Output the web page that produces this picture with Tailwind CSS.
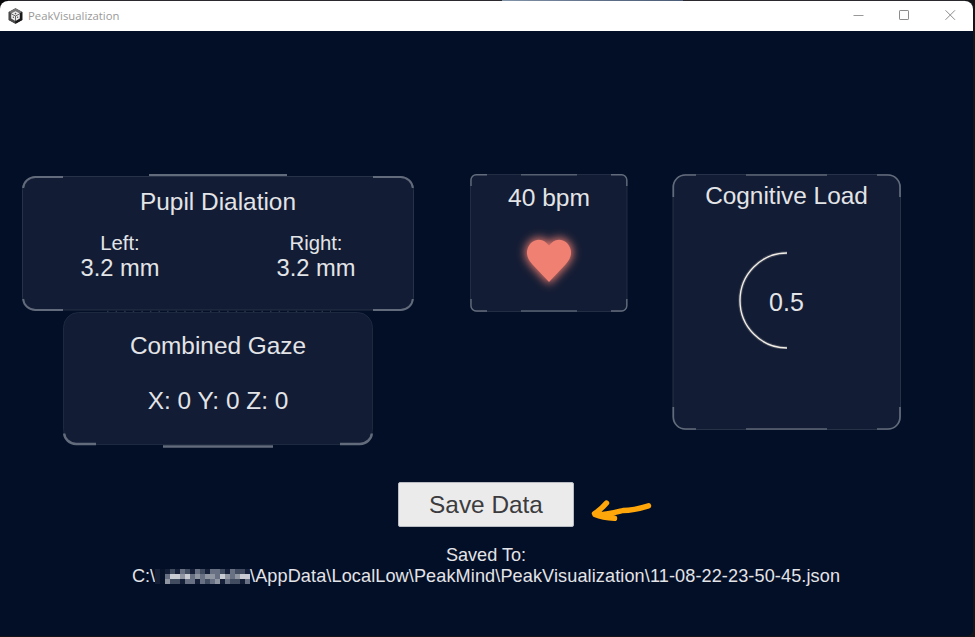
<!DOCTYPE html>
<html lang="en">
<head>
<meta charset="utf-8">
<title>PeakVisualization</title>
<script src="https://cdn.jsdelivr.net/npm/@tailwindcss/browser@4"></script>
</head>
<body class="h-[637px] w-[975px] overflow-hidden bg-[#151518] font-['Liberation_Sans',Arial,sans-serif] text-[#e3e4e7]">
<div class="relative flex h-[636px] w-[973px] flex-col pt-px">
  <div class="absolute left-0 top-0 h-3 w-[973px] bg-[#2b292d]"></div>
  <div class="absolute left-[502px] top-0 h-px w-[181px] bg-linear-to-r from-[#8294a8] via-[#62728b] to-[#4b5c78]"></div>
  <div class="absolute left-0 top-0 size-2 bg-[#09090b]"></div>
  <div class="absolute right-0 top-0 size-2 bg-[#151518]"></div>
  <header class="relative flex h-[30px] shrink-0 items-center justify-between rounded-t-lg bg-white pl-2 pr-[17px]">
    <div class="flex items-center gap-[5px]">
      <svg class="-mt-px h-4 w-[15px]" viewBox="0 0 15 16">
        <path d="M7.500.3 14.300 4v8L7.500 15.800.7 12V4z" fill="#353535"/>
        <path d="M7.500.3 14.300 4 11 5.800 7.500 3.900 4 5.800.7 4z" fill="#777"/>
        <path d="M.7 4 4 5.800v4.400L7.500 12v3.800L.7 12z" fill="#4b4b4b"/>
        <path d="M14.300 4v8l-6.800 3.800V12l3.500-1.800V5.800z" fill="#181818"/>
        <path d="m7.500 3.200 4.300 2.400v4.900l-4.300 2.400-4.300-2.400V5.600z" fill="#ededed"/>
        <path d="M7.500 8v5M7.500 8 3.200 5.800M7.500 8l4.300-2.200" stroke="#444" stroke-width=".8"/>
        <circle cx="7.500" cy="5.600" r=".8" fill="#555"/><circle cx="5.400" cy="9.300" r=".7" fill="#555"/><circle cx="9.600" cy="9.300" r=".7" fill="#555"/>
      </svg>
      <span class="font-['Open_Sans',sans-serif] text-[11.3px] leading-none text-[#999]">PeakVisualization</span>
    </div>
    <div class="flex items-center gap-[35px]">
      <svg class="h-3 w-[11px]" viewBox="0 0 11 12" fill="none" stroke="#999"><path d="M.5 5.500h10"/></svg>
      <svg class="h-3 w-[11px]" viewBox="0 0 11 12" fill="none" stroke="#8c8c8c"><rect x=".5" y=".5" width="9" height="9" rx=".6"/></svg>
      <svg class="h-3 w-[11px]" viewBox="0 0 11 12" fill="none" stroke="#8c8c8c"><path d="m.5.300 9.500 9.500m0-9.500-9.500 9.500"/></svg>
    </div>
  </header>

  <main class="flex flex-1 flex-col rounded-br-md bg-[#030f27] pt-[143px]">
    <div class="flex items-start pl-[22px]">
      <div class="flex w-[392px] flex-col items-center">
        <section class="relative h-[138px] w-[392px]">
          <svg class="absolute inset-0 h-[138px] w-[392px]" viewBox="0 0 392 138" fill="none">
            <rect x=".5" y="2.500" width="391" height="133.500" rx="13" fill="#121c34" stroke="#273147"/>
            <g stroke="#626b7b" stroke-width="2">
              <path d="M1.200 14A12.500 11.500 0 0 1 13.500 3H41M351 3h27.500a12.500 11.500 0 0 1 12.300 11M1.200 125a12.500 11.500 0 0 0 12.300 11H41M351 136h27.500a12.500 11.500 0 0 0 12.300-11"/>
              <path d="M127 1h138"/>
            </g>
            <path d="M85 137.300h224" stroke="#2b354a" stroke-width="1.200" stroke-dasharray="1.500 7.080"/>
          </svg>
          <h2 class="relative pt-[14px] text-center text-[24.4px] leading-7">Pupil Dialation</h2>
          <div class="relative mt-[15px] flex justify-center gap-[117px] text-center">
            <div class="w-[79px] whitespace-nowrap"><p class="text-[20.3px] leading-[25px]">Left:</p><p class="text-[23.7px] leading-[25px]">3.2 mm</p></div>
            <div class="w-[79px] whitespace-nowrap"><p class="text-[20.3px] leading-[25px]">Right:</p><p class="text-[23.7px] leading-[25px]">3.2 mm</p></div>
          </div>
        </section>
        <section class="relative h-[137px] w-[310px]">
          <svg class="absolute inset-0 h-[137px] w-[310px]" viewBox="0 0 310 137" fill="none">
            <rect x=".5" y=".5" width="309" height="132" rx="15" fill="#121c34" stroke="#1d293f"/>
            <path d="M1.200 121.500A12.500 11 0 0 0 13 132h20M277 132h20a12.500 11 0 0 0 11.800-10.500M100 134.500h110" stroke="#626b7b" stroke-width="2.400"/>
          </svg>
          <h2 class="relative pt-[20px] text-center text-[24.4px] leading-7">Combined Gaze</h2>
          <p class="relative mt-[27px] text-center text-[24.4px] leading-7">X: 0 Y: 0 Z: 0</p>
        </section>
      </div>

      <section class="relative ml-[56px] flex h-[138px] w-[158px] flex-col items-center">
        <svg class="absolute inset-0 h-[138px] w-[158px]" viewBox="0 0 158 138" fill="none">
          <rect x=".5" y=".5" width="156.500" height="137" rx="6" fill="#121c34" stroke="#222d43"/>
          <path d="M1 12V6A5.300 5.300 0 0 1 6.300.7H17M141 .7h10.500A5.300 5.300 0 0 1 156.800 6v6M1 125v6.700A5.300 5.300 0 0 0 6.300 137H17M141 137h10.500a5.300 5.300 0 0 0 5.300-5.300V125" stroke="#626b7b" stroke-width="1.400"/>
          <path d="M51 .7h56M51 137h56" stroke="#566071" stroke-width="1.400"/>
        </svg>
        <h2 class="relative pt-[10px] text-[24.6px] leading-7">40 bpm</h2>
        <svg class="relative mt-[14px] h-[70px] w-[80px]" viewBox="0 0 80 70">
          <defs><filter id="glow" x="-50%" y="-50%" width="200%" height="200%"><feGaussianBlur stdDeviation="5"/></filter></defs>
          <path d="M40 56 23.500 38.500C18.500 33 17 28 18.500 23 21 14 31 10.500 37.500 17L40 19.500 42.500 17C49 10.500 59 14 61.500 23 63 28 61.500 33 56.500 38.500Z" fill="#ee7e70" stroke="#ee7e70" stroke-width="3" filter="url(#glow)"/>
          <path d="M40 56 23.500 38.500C18.500 33 17 28 18.500 23 21 14 31 10.500 37.500 17L40 19.500 42.500 17C49 10.500 59 14 61.500 23 63 28 61.500 33 56.500 38.500Z" fill="#ef8072"/>
        </svg>
      </section>

      <section class="relative ml-[44px] flex h-[256px] w-[229px] flex-col items-center">
        <svg class="absolute inset-0 h-[256px] w-[229px]" viewBox="0 0 229 256" fill="none">
          <rect x="1" y=".5" width="227.500" height="255" rx="13" fill="#121c34" stroke="#273147"/>
          <path d="M1.300 23V13A12 12 0 0 1 13.300 1H24M205 1h11a12 12 0 0 1 12 12v10M1.300 233v10a12 12 0 0 0 12 12H24M205 255h11a12 12 0 0 0 12-12v-10" stroke="#626b7b" stroke-width="1.700"/>
          <path d="M74 1h81M74 255h81" stroke="#5d6676" stroke-width="1.700"/>
        </svg>
        <h2 class="relative pt-[8px] text-[24.4px] leading-7">Cognitive Load</h2>
        <div class="relative mt-[41px] flex h-[98px] w-[98px] items-center justify-center">
          <svg class="absolute inset-0 size-[98px]" viewBox="0 0 98 98" fill="none">
            <path d="M49 2A47 47.500 0 0 0 49 97" stroke="#f2ede4" stroke-opacity=".18" stroke-width="3.500"/>
            <path d="M49 2A47 47.500 0 0 0 49 97" stroke="#f0ece6" stroke-width="1.400"/>
          </svg>
          <span class="relative pt-[3px] text-[25px] leading-7">0.5</span>
        </div>
      </section>
    </div>

    <div class="relative ml-[398px] mt-[33px] w-[176px]">
      <button class="block h-[45px] w-[176px] rounded-[2px] border border-[#b9bdc3] bg-[#ebebeb] text-[24.4px] leading-[43px] text-[#3c3c3e]">Save Data</button>
      <svg class="absolute left-[190px] top-[12px] h-[32px] w-[68px]" viewBox="0 0 68 32" fill="none" stroke="#ffa60a" stroke-width="5.400" stroke-linecap="round" stroke-linejoin="round">
        <path d="M60.500 11.800C50 15 42 16.500 35 16.500 27 18.500 17 21.500 7 20.500M18.500 9C15 13 11 17 6.500 19.500M7 20.500C14 23.500 20 24 26.500 24.300"/>
      </svg>
    </div>

    <footer class="mt-[18px] w-[972px] text-[18.1px] leading-[20px]">
      <p class="text-center">Saved To:</p>
      <div class="flex h-[22px] items-center whitespace-nowrap pl-[132px]">
        <span class="w-[23px]">C:\</span>
        <svg class="mt-px h-[15px] w-[95px]" viewBox="0 0 19 3" shape-rendering="crispEdges">
          <path fill="#152038" d="M0 0h19v3H0z"/>
          <path fill="#424c61" d="M3 0h1v1H3zM6 0h1v1H6zM9 0h1v1H9zM13 0h1v1h-1zM16 0h2v1h-2zM2 2h2v1H2zM4 2h1v1H4zM10 2h1v1h-1zM15 2h2v1h-2z"/>
          <path fill="#687083" d="M5 0h1v1H5zM8 0h1v1H8zM11 0h2v1h-2zM15 0h1v1h-1zM2 1h1v1H2zM7 1h1v1H7zM9 1h1v1H9zM12 1h1v1h-1zM15 1h1v1h-1zM6 2h2v1H6zM9 2h1v1H9zM11 2h1v1h-1zM14 2h1v1h-1zM18 2h1v1h-1z"/>
          <path fill="#9095a2" d="M5 1h1v1H5zM8 1h1v1H8zM10 1h2v1h-2zM14 1h1v1h-1zM16 1h1v1h-1zM2 2h1v1H2zM12 2h1v1h-1z"/>
          <path fill="#c8cbd2" d="M3 1h2v1H3zM6 1h1v1H6zM13 1h1v1h-1zM17 1h2v1h-2z"/>
          <path fill="#071329" d="M1 0h1v3H1z"/>
        </svg>
        <span class="tracking-[0.11px]">\AppData\LocalLow\PeakMind\PeakVisualization\11-08-22-23-50-45.json</span>
      </div>
    </footer>
  </main>
</div>
</body>
</html>
